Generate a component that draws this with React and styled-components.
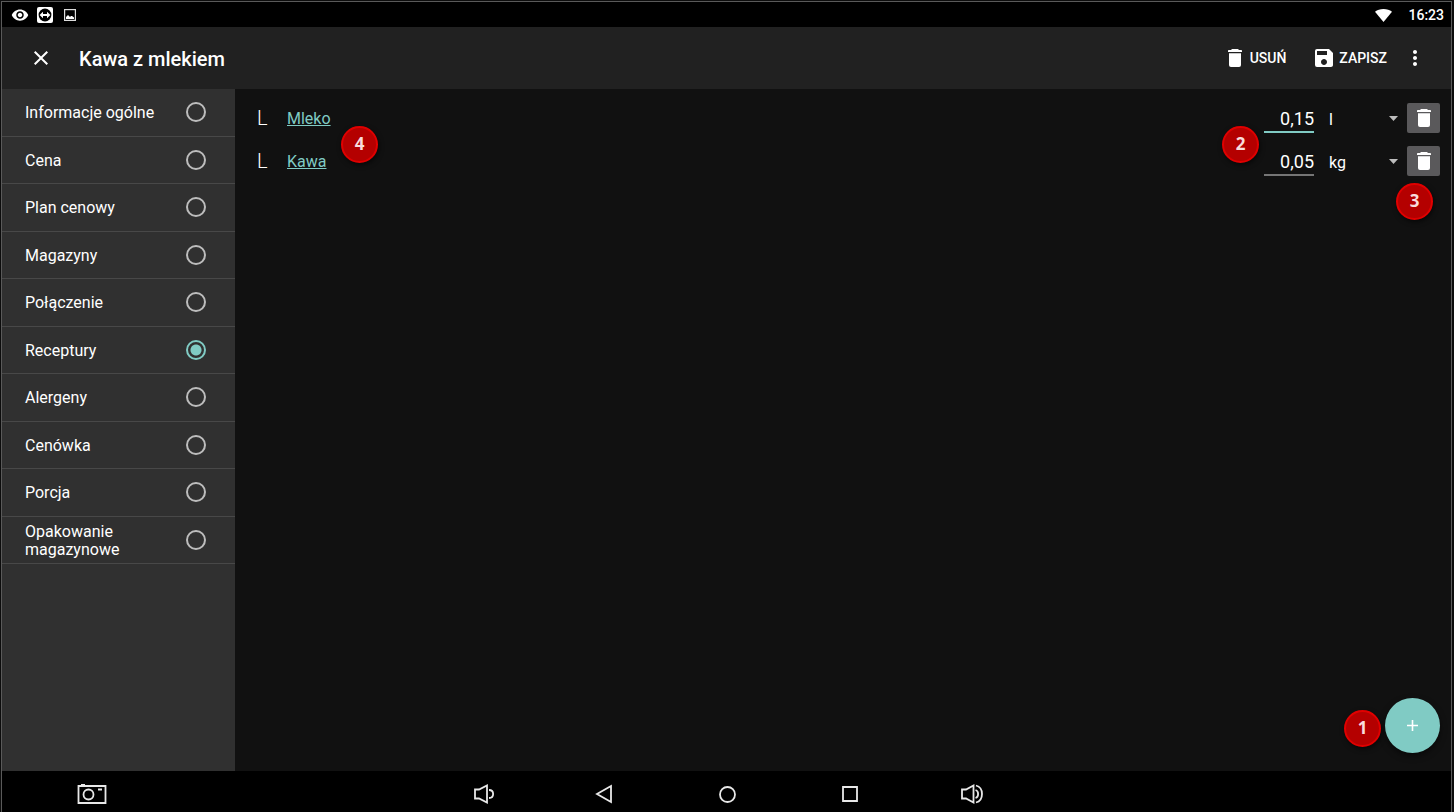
import React, { useState } from "react";
import styled, { createGlobalStyle, css } from "styled-components";
import { MdClose, MdMoreVert, MdSave, MdVisibility } from "react-icons/md";

const GlobalStyle = createGlobalStyle`
  * {
    box-sizing: border-box;
  }
  body {
    margin: 0;
    background-color: #0c0c0c;
    color: #fff;
    font-family: Roboto, "Noto Sans", sans-serif;
  }
  button, input, select {
    font: inherit;
    color: inherit;
  }
`;

const Screen = styled.div`
  height: 100vh;
  padding: 1px 2px 0 1px;
`;

const Frame = styled.div`
  height: 100%;
  display: flex;
  flex-direction: column;
  border: 1px solid #5a5a5a;
  border-bottom: none;
`;

const StatusBar = styled.div`
  height: 25px;
  flex-shrink: 0;
  display: flex;
  align-items: center;
  justify-content: space-between;
  padding: 1px 7px 0 9px;
  background-color: #000;
`;

const StatusGroup = styled.div`
  display: flex;
  align-items: center;
  gap: ${(props) => props.$gap};
`;

const Clock = styled.time`
  font-size: 14px;
  font-weight: 500;
  line-height: 24px;
`;

const AppBar = styled.header`
  height: 62px;
  flex-shrink: 0;
  display: flex;
  align-items: center;
  padding: 0 24px 0 27px;
  background-color: #212121;
`;

const IconButton = styled.button`
  width: 24px;
  height: 24px;
  display: flex;
  align-items: center;
  justify-content: center;
  padding: 0;
  border: none;
  background: none;
  cursor: pointer;
`;

const Title = styled.h1`
  flex: 1;
  margin: 0 0 0 26px;
  padding-top: 2px;
  font-size: 20px;
  font-weight: 500;
  line-height: 24px;
`;

const ActionButton = styled.button`
  display: flex;
  align-items: center;
  gap: 3px;
  margin-right: 26px;
  padding: 0;
  border: none;
  background: none;
  font-size: 14px;
  font-weight: 500;
  line-height: 24px;
  cursor: pointer;

  & + ${IconButton} {
    margin-left: -10px;
  }
`;

const Body = styled.div`
  flex: 1;
  min-height: 0;
  display: flex;
`;

const SideBar = styled.nav`
  width: 233px;
  flex-shrink: 0;
  background-color: #303030;
`;

const SideList = styled.ul`
  height: 475px;
  display: grid;
  grid-auto-rows: 1fr;
  margin: 0;
  padding: 0;
  list-style: none;
`;

const SideItem = styled.li`
  display: flex;
  border-bottom: 1px solid #484848;
`;

const SideLabel = styled.label`
  flex: 1;
  display: flex;
  align-items: center;
  justify-content: space-between;
  padding: 2px 29px 0 23px;
  font-size: 16px;
  line-height: 18px;
  cursor: pointer;
`;

const SideText = styled.span`
  width: 136px;
`;

const Radio = styled.input`
  appearance: none;
  width: 20px;
  height: 20px;
  flex-shrink: 0;
  margin: 0 0 2px;
  border: 2px solid #bdbdbd;
  border-radius: 50%;
  cursor: pointer;

  &:checked {
    border-color: #80cbc4;
    background: radial-gradient(circle, #80cbc4 5px, transparent 6px);
  }
`;

const Content = styled.main`
  position: relative;
  flex: 1;
  min-width: 0;
  padding: 14px 11px 0 22px;
  background-color: #111;
`;

const IngredientList = styled.ul`
  display: flex;
  flex-direction: column;
  gap: 13px;
  margin: 0;
  padding: 0;
  list-style: none;
`;

const Ingredient = styled.li`
  height: 30px;
  display: flex;
  align-items: center;
`;

const Branch = styled.span`
  width: 30px;
  color: #fff;
  font-size: 20px;
  font-weight: 300;
  line-height: 30px;
`;

const IngredientLink = styled.a`
  margin-right: auto;
  padding-top: 2px;
  color: #80cbc4;
  font-size: 16px;
  line-height: 28px;
`;

const Amount = styled.input`
  width: 50px;
  height: 30px;
  padding: 2px 0 0;
  border: none;
  border-bottom: 2px solid ${(props) => (props.$active ? "#80cbc4" : "#757575")};
  outline: none;
  background: none;
  font-size: 18px;
  text-align: right;
`;

const UnitBox = styled.div`
  width: 69px;
  display: flex;
  align-items: center;
  margin: 0 9px 0 15px;
`;

const UnitSelect = styled.select`
  appearance: none;
  flex: 1;
  min-width: 0;
  height: 30px;
  padding: 2px 0 0;
  border: none;
  outline: none;
  background: none;
  font-size: 16px;
`;

const DeleteButton = styled.button`
  width: 33px;
  height: 30px;
  display: flex;
  align-items: center;
  justify-content: center;
  padding: 0;
  border: none;
  border-radius: 2px;
  background-color: #5a595b;
  cursor: pointer;
`;

const AddButton = styled.button`
  position: absolute;
  right: 11px;
  bottom: 18px;
  width: 55px;
  height: 55px;
  display: flex;
  align-items: center;
  justify-content: center;
  padding: 0;
  border: none;
  border-radius: 50%;
  background-color: #80cbc4;
  box-shadow: 0 3px 6px rgba(0, 0, 0, 0.5);
  cursor: pointer;
`;

const badgePlace = {
  1: css`
    right: 70px;
    bottom: 24px;
  `,
  2: css`
    top: 37px;
    right: 192px;
  `,
  3: css`
    top: 94px;
    right: 18px;
  `,
  4: css`
    top: 37px;
    left: 106px;
  `,
};

const Badge = styled.span`
  position: absolute;
  ${(props) => badgePlace[props.$step]}
  width: 37px;
  height: 37px;
  border: 2px solid #e00000;
  border-radius: 50%;
  background-color: #b40000;
  box-shadow: 1px 2px 5px rgba(0, 0, 0, 0.6);
  color: #f8dcdc;
  font-family: "Open Sans", sans-serif;
  font-size: 17px;
  font-weight: bold;
  line-height: 32px;
  text-align: center;
`;

const NavBar = styled.footer`
  height: 41px;
  flex-shrink: 0;
  display: flex;
  align-items: center;
  padding: 5px 467px 0 74px;
  background-color: #000;
`;

const NavKeys = styled.div`
  flex: 1;
  display: flex;
  justify-content: space-between;
  margin-left: 364px;
`;

const NavButton = styled(IconButton)`
  width: ${(props) => (props.$wide ? "32px" : "24px")};
`;

const RemoteIcon = () => (
  <svg width="16" height="16" viewBox="0 0 16 16">
    <rect width="16" height="16" rx="2" fill="#fff" />
    <circle cx="8" cy="8" r="6.4" fill="#000" />
    <path d="M2.6 8 6 4.7V7h4V4.7L13.4 8 10 11.3V9H6v2.3z" fill="#fff" />
  </svg>
);

const PictureIcon = () => (
  <svg width="18" height="12" viewBox="-3 0 18 12">
    <rect
      x="0.6"
      y="0.6"
      width="10.8"
      height="10.8"
      fill="none"
      stroke="#ddd"
      strokeWidth="1.2"
    />
    <path d="M2 10V8l2-2 2 2 1-1h1l2 1.5V10z" fill="#fff" />
  </svg>
);

const WifiIcon = () => (
  <svg width="17" height="13" viewBox="0 0 17 13">
    <path d="M8.5 13 0 2.8C2.2 1 5.2 0 8.5 0s6.3 1 8.5 2.8z" fill="#fff" />
  </svg>
);

const TrashIcon = () => (
  <svg width="24" height="24" viewBox="0 0 24 24" fill="#fff">
    <path d="M6 7.2h12V19a2 2 0 0 1-2 2H8a2 2 0 0 1-2-2z" />
    <path d="M9 3h6l1 1h2.2q.8 0 .8.8V6H5V4.8Q5 4 5.800 4H8z" />
  </svg>
);

const ArrowIcon = () => (
  <svg width="9" height="5" viewBox="0 0 9 5">
    <path d="M0 0h9L4.5 5z" fill="#bdbdbd" />
  </svg>
);

const PlusIcon = () => (
  <svg width="11" height="11" viewBox="0 0 11 11">
    <path d="M5.5 0v11M0 5.5h11" stroke="#fff" strokeWidth="1.6" />
  </svg>
);

const NavIcon = ({ width = 24, children }) => (
  <svg
    width={width}
    height="24"
    viewBox={`0 0 ${width} 24`}
    fill="none"
    stroke="#e8e8e8"
    strokeWidth="1.8"
  >
    {children}
  </svg>
);

const tabs = [
  "Informacje ogólne",
  "Cena",
  "Plan cenowy",
  "Magazyny",
  "Połączenie",
  "Receptury",
  "Alergeny",
  "Cenówka",
  "Porcja",
  "Opakowanie magazynowe",
];

const ingredients = [
  { name: "Mleko", amount: "0,15", unit: "l" },
  { name: "Kawa", amount: "0,05", unit: "kg" },
];

const App = () => {
  const [tab, setTab] = useState("Receptury");
  const [active, setActive] = useState("Mleko");

  return (
    <>
      <GlobalStyle />
      <Screen>
        <Frame>
          <StatusBar>
            <StatusGroup $gap="8px">
              <MdVisibility size={18} />
              <RemoteIcon />
              <PictureIcon />
            </StatusGroup>
            <StatusGroup $gap="16px">
              <WifiIcon />
              <Clock>16:23</Clock>
            </StatusGroup>
          </StatusBar>
          <AppBar>
            <IconButton aria-label="Zamknij">
              <MdClose size={24} />
            </IconButton>
            <Title>Kawa z mlekiem</Title>
            <ActionButton>
              <TrashIcon />
              USUŃ
            </ActionButton>
            <ActionButton>
              <MdSave size={24} />
              ZAPISZ
            </ActionButton>
            <IconButton aria-label="Więcej">
              <MdMoreVert size={24} />
            </IconButton>
          </AppBar>
          <Body>
            <SideBar>
              <SideList>
                {tabs.map((name) => (
                  <SideItem key={name}>
                    <SideLabel>
                      <SideText>{name}</SideText>
                      <Radio
                        type="radio"
                        name="tab"
                        checked={tab === name}
                        onChange={() => setTab(name)}
                      />
                    </SideLabel>
                  </SideItem>
                ))}
              </SideList>
            </SideBar>
            <Content>
              <IngredientList>
                {ingredients.map(({ name, amount, unit }) => (
                  <Ingredient key={name}>
                    <Branch>L</Branch>
                    <IngredientLink href="#">{name}</IngredientLink>
                    <Amount
                      aria-label={`Ilość: ${name}`}
                      defaultValue={amount}
                      $active={active === name}
                      onFocus={() => setActive(name)}
                    />
                    <UnitBox>
                      <UnitSelect
                        aria-label={`Jednostka: ${name}`}
                        defaultValue={unit}
                      >
                        <option>l</option>
                        <option>kg</option>
                      </UnitSelect>
                      <ArrowIcon />
                    </UnitBox>
                    <DeleteButton aria-label={`Usuń: ${name}`}>
                      <TrashIcon />
                    </DeleteButton>
                  </Ingredient>
                ))}
              </IngredientList>
              <AddButton aria-label="Dodaj">
                <PlusIcon />
              </AddButton>
              {[1, 2, 3, 4].map((step) => (
                <Badge key={step} $step={step}>
                  {step}
                </Badge>
              ))}
            </Content>
          </Body>
          <NavBar>
            <NavButton $wide aria-label="Zrzut ekranu">
              <NavIcon width={32}>
                <path d="M2.5 4h27v17h-27zM5 3h4M22 7.5h4" />
                <circle cx="12.5" cy="12.5" r="5" />
              </NavIcon>
            </NavButton>
            <NavKeys>
              <NavButton aria-label="Ciszej">
                <NavIcon>
                  <path d="M3 7.5h4l8-4v17l-8-4H3zM17 8c5.5 0 5.5 8 0 8" />
                </NavIcon>
              </NavButton>
              <NavButton aria-label="Wstecz">
                <NavIcon>
                  <path d="M17 4v16L3 12z" />
                </NavIcon>
              </NavButton>
              <NavButton aria-label="Ekran główny">
                <NavIcon>
                  <circle cx="11.5" cy="12.5" r="7.5" />
                </NavIcon>
              </NavButton>
              <NavButton aria-label="Ostatnie">
                <NavIcon>
                  <path d="M5 5h14v14H5z" />
                </NavIcon>
              </NavButton>
              <NavButton aria-label="Głośniej">
                <NavIcon>
                  <path d="M2 7.5h4l7.5-4v17l-7.5-4H2zM15.5 8c3.5 1 3.5 7 0 8M16 3.500c8 2 8 15 0 17" />
                </NavIcon>
              </NavButton>
            </NavKeys>
          </NavBar>
        </Frame>
      </Screen>
    </>
  );
};

export default App;
